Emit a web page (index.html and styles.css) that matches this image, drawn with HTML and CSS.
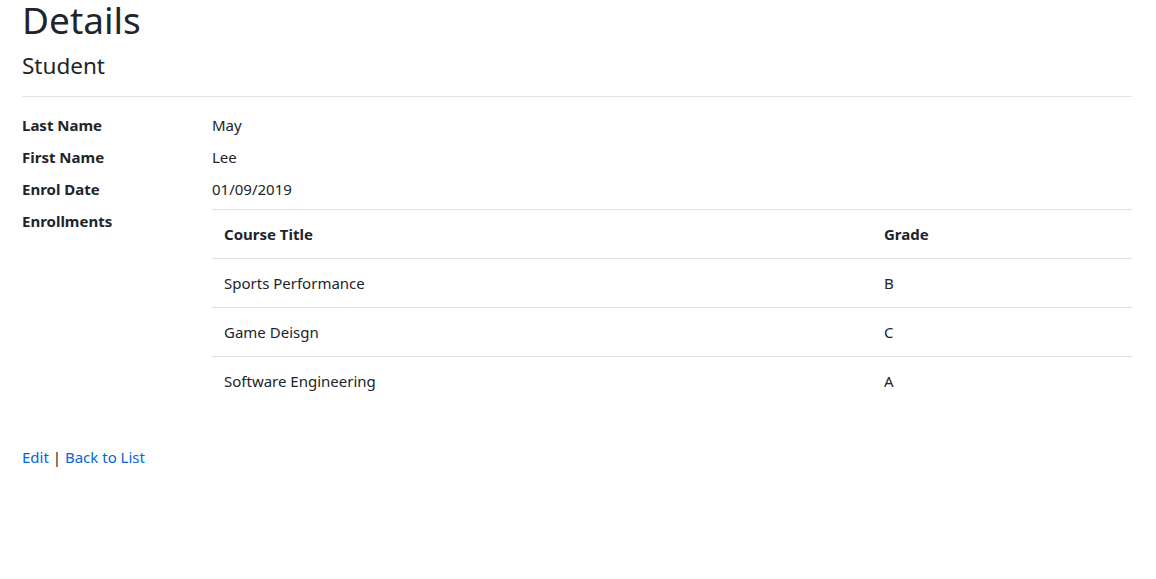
FILE: index.html
```html
<!DOCTYPE html>
<html>
<head>
<meta charset="utf-8">
<title>Details</title>
<link rel="stylesheet" href="styles.css">
</head>
<body>
<main class="container">
  <h1 class="title">Details</h1>
  <div>
    <h4 class="subtitle">Student</h4>
    <hr class="divider">
    <dl class="details">
      <dt>Last Name</dt>
      <dd>May</dd>
      <dt>First Name</dt>
      <dd>Lee</dd>
      <dt>Enrol Date</dt>
      <dd>01/09/2019</dd>
      <dt>Enrollments</dt>
      <dd>
        <table class="table">
          <thead>
            <tr><th class="col-title">Course Title</th><th>Grade</th></tr>
          </thead>
          <tbody>
            <tr><td>Sports Performance</td><td>B</td></tr>
            <tr><td>Game Deisgn</td><td>C</td></tr>
            <tr><td>Software Engineering</td><td>A</td></tr>
          </tbody>
        </table>
      </dd>
    </dl>
  </div>
  <div class="actions">
    <a href="#">Edit</a> | <a href="#">Back to List</a>
  </div>
</main>
</body>
</html>
```

FILE: styles.css
```css
html, body {
  margin: 0;
  padding: 0;
  background: #fff;
}
body {
  font-family: "Segoe UI", "Noto Sans", "Open Sans", sans-serif;
  font-size: 15px;
  line-height: 24px;
  color: #212529;
}
.container {
  width: 1110px;
  margin-left: 22px;
  padding-top: 1px;
}
.title {
  font-size: 37px;
  font-weight: 400;
  line-height: 38px;
  margin: 0 0 12px 0;
}
.subtitle {
  font-size: 22.5px;
  font-weight: 400;
  line-height: 29px;
  margin: 0;
}
.divider {
  border: 0;
  border-top: 1px solid rgba(0, 0, 0, 0.1);
  margin: 16px 0 16px 0;
}
.details {
  display: grid;
  grid-template-columns: 190px 1fr;
  margin: 0 0 16px 0;
}
.details dt {
  font-weight: 700;
  margin: 0 0 8px 0;
}
.details dd {
  margin: 0 0 8px 0;
}
.table {
  width: 100%;
  border-collapse: collapse;
  margin-bottom: 16px;
}
.table th, .table td {
  text-align: left;
  padding: 12px;
  border-top: 1px solid #dee2e6;
  vertical-align: top;
}
.table th {
  font-weight: 700;
}
.col-title {
  width: 636px;
}
.actions a {
  color: #0366d6;
  text-decoration: none;
}
```
